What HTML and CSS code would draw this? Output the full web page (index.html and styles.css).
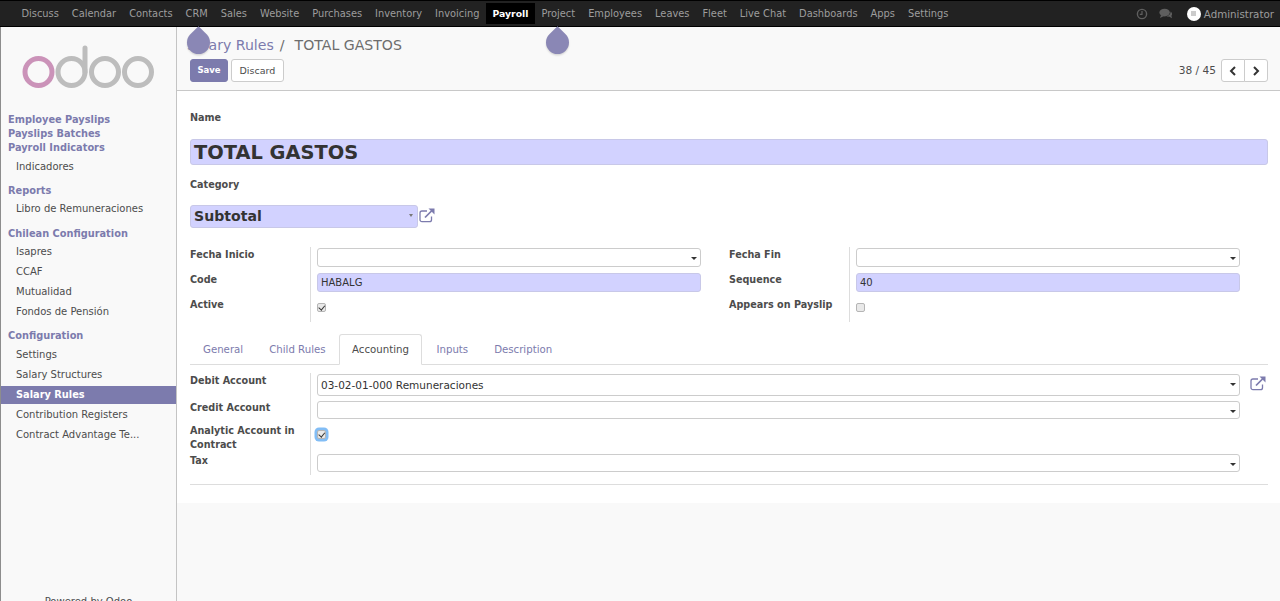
FILE: index.html
```html
<!DOCTYPE html>
<html lang="en">
<head>
  <meta charset="UTF-8" />
  <meta name="viewport" content="width=device-width, initial-scale=1.0" />
  <title>Salary Rules - TOTAL GASTOS</title>
  <link rel="stylesheet" href="styles.css">
</head>
<body>
  <header class="navbar">
    <nav class="apps">
      <a>Discuss</a><a>Calendar</a><a>Contacts</a><a>CRM</a><a>Sales</a><a>Website</a><a>Purchases</a><a>Inventory</a><a>Invoicing</a><a class="current">Payroll</a><a>Project</a><a>Employees</a><a>Leaves</a><a>Fleet</a><a>Live Chat</a><a>Dashboards</a><a>Apps</a><a>Settings</a>
    </nav>
    <div class="systray">
      <svg class="tray-icon" viewBox="0 0 12 12" width="12" height="12"><circle cx="6" cy="6" r="4.6" fill="none" stroke="#5f5f5f" stroke-width="1.4"/><path d="M6 3v3.4H3.8" fill="none" stroke="#5f5f5f" stroke-width="1.2"/></svg>
      <svg class="tray-icon" viewBox="0 0 14 12" width="14" height="12"><ellipse cx="5.6" cy="4.6" rx="5.2" ry="3.9" fill="#5f5f5f"/><path d="M2 7l-1 3 4-2zM11.6 3.4c1.6 1 2 3 .8 4.4l.6 2.4-3-1.6c-1 .1-2-.1-2.800-.5 2.600-.3 4.600-2.300 4.400-4.700z" fill="#5f5f5f"/></svg>
      <span class="avatar"><i></i></span>
      <span class="user">Administrator</span>
    </div>
  </header>

  <div class="main">
    <aside class="sidebar">
      <div class="logo">
        <svg viewBox="0 0 140 50" width="140" height="50">
          <circle cx="17.500" cy="30" r="13.500" fill="none" stroke="#cb93b9" stroke-width="5"/>
          <circle cx="50.500" cy="30" r="13.500" fill="none" stroke="#bdbdbd" stroke-width="5"/>
          <path d="M64 30V6" fill="none" stroke="#bdbdbd" stroke-width="5" stroke-linecap="round"/>
          <circle cx="84" cy="30" r="13.500" fill="none" stroke="#bdbdbd" stroke-width="5"/>
          <circle cx="117" cy="30" r="13.500" fill="none" stroke="#bdbdbd" stroke-width="5"/>
        </svg>
      </div>
      <div class="menu-head tight">Employee Payslips</div>
      <div class="menu-head tight">Payslips Batches</div>
      <div class="menu-head tight">Payroll Indicators</div>
      <a class="menu-item">Indicadores</a>
      <div class="menu-head">Reports</div>
      <a class="menu-item">Libro de Remuneraciones</a>
      <div class="menu-head wide-top">Chilean Configuration</div>
      <a class="menu-item">Isapres</a>
      <a class="menu-item">CCAF</a>
      <a class="menu-item">Mutualidad</a>
      <a class="menu-item">Fondos de Pensión</a>
      <div class="menu-head wide-bottom">Configuration</div>
      <a class="menu-item">Settings</a>
      <a class="menu-item">Salary Structures</a>
      <a class="menu-item active">Salary Rules</a>
      <a class="menu-item">Contribution Registers</a>
      <a class="menu-item">Contract Advantage Te...</a>
      <div class="powered">Powered by <b>Odoo</b></div>
    </aside>

    <main class="content">
      <div class="control-panel">
        <div class="breadcrumb"><a>Salary Rules</a><span class="sep">/</span><span>TOTAL GASTOS</span></div>
        <div class="cp-row">
          <div class="buttons">
            <button class="btn btn-primary">Save</button>
            <button class="btn">Discard</button>
          </div>
          <div class="pager">
            <span class="pager-count">38 / 45</span>
            <div class="pager-btns">
              <button><svg viewBox="0 0 8 10" width="8" height="10"><path d="M6 1L2 5l4 4" fill="none" stroke="#333" stroke-width="2"/></svg></button>
              <button><svg viewBox="0 0 8 10" width="8" height="10"><path d="M2 1l4 4-4 4" fill="none" stroke="#333" stroke-width="2"/></svg></button>
            </div>
          </div>
        </div>
      </div>

      <div class="sheet">
        <div class="top-label name-label">Name</div>
        <div class="field name-field required">TOTAL GASTOS</div>
        <div class="top-label cat-label">Category</div>
        <div class="cat-row">
          <div class="field cat-field required">Subtotal<i class="caret small"></i></div>
          <svg class="ext" viewBox="0 0 16 15" width="16" height="15"><use href="#ext-link"/></svg>
        </div>

        <div class="groups">
          <div class="group">
            <div class="lab">Fecha Inicio</div>
            <div class="val"><div class="field input">&nbsp;<i class="caret"></i></div></div>
            <div class="lab">Code</div>
            <div class="val"><div class="field input required">HABALG</div></div>
            <div class="lab">Active</div>
            <div class="val"><span class="check on"></span></div>
          </div>
          <div class="group">
            <div class="lab">Fecha Fin</div>
            <div class="val"><div class="field input">&nbsp;<i class="caret"></i></div></div>
            <div class="lab">Sequence</div>
            <div class="val"><div class="field input required">40</div></div>
            <div class="lab">Appears on Payslip</div>
            <div class="val"><span class="check"></span></div>
          </div>
        </div>

        <div class="tabs">
          <a>General</a><a>Child Rules</a><a class="open">Accounting</a><a>Inputs</a><a>Description</a>
        </div>

        <div class="acc">
          <div class="lab">Debit Account</div>
          <div class="val with-link">
            <div class="field tall">03-02-01-000 Remuneraciones<i class="caret"></i></div>
            <svg class="ext ext-far" viewBox="0 0 16 15" width="16" height="15"><use href="#ext-link"/></svg>
          </div>
          <div class="lab">Credit Account</div>
          <div class="val"><div class="field short">&nbsp;<i class="caret"></i></div></div>
          <div class="lab analytic">Analytic Account in Contract</div>
          <div class="val"><span class="check on focus"></span></div>
          <div class="lab">Tax</div>
          <div class="val"><div class="field short">&nbsp;<i class="caret"></i></div></div>
        </div>
        <hr class="sheet-end">
      </div>
    </main>
  </div>

  <span class="drop drop-a"></span>
  <span class="drop drop-b"></span>

  <svg width="0" height="0" class="defs">
    <symbol id="ext-link" viewBox="0 0 16 15">
      <path d="M12.500 8.500v3.200a2 2 0 0 1-2 2H3a2 2 0 0 1-2-2V5a2 2 0 0 1 2-2h5" fill="none" stroke="#7c7bad" stroke-width="1.300"/>
      <path d="M6 9.500L13 2.500" fill="none" stroke="#7c7bad" stroke-width="1.700"/>
      <path d="M9.500 .5H15.500V6.500z" fill="#7c7bad"/>
    </symbol>
  </svg>
</body>
</html>
```

FILE: styles.css
```css
* {
  box-sizing: border-box;
}
html, body {
  height: 100%;
  margin: 0;
  overflow: hidden;
}
body {
  font-family: "DejaVu Sans", sans-serif;
  font-size: 10px;
  color: #4c4c4c;
  background: #f9f9f9;
}
.defs {
  position: absolute;
}

/* top bar */
.navbar {
  display: flex;
  justify-content: space-between;
  height: 27px;
  padding: 3px 6px 0 15px;
  background: #222;
  border-top: 1px solid #000;
  border-bottom: 1px solid #000;
  color: #9d9d9d;
}
.apps {
  display: flex;
  margin-top: -1px;
  font-size: 9.850px;
}
.apps a {
  height: 21px;
  line-height: 21px;
  padding: 0 6.500px;
}
.apps .current {
  background: #000;
  color: #fff;
  font-weight: bold;
  font-size: 9.300px;
}
.systray {
  display: flex;
  align-items: center;
  height: 21px;
  margin-top: -1px;
}
.tray-icon {
  margin-right: 11px;
}
.avatar {
  display: flex;
  align-items: center;
  justify-content: center;
  width: 14px;
  height: 14px;
  margin-left: 3px;
  margin-right: 3px;
  border-radius: 50%;
  background: #fff;
}
.avatar i {
  width: 5px;
  height: 5px;
  background: #ccc;
}
.user {
  font-size: 10.300px;
}

/* layout */
.main {
  display: flex;
  height: calc(100% - 27px);
}
.sidebar {
  display: flex;
  flex-direction: column;
  flex: 0 0 177px;
  background: #f9f9f9;
  border-left: 1px solid #8d8d8d;
  border-right: 1px solid #c4c4c4;
}
.logo {
  height: 86px;
  padding: 15px 0 0 20px;
}
.menu-head {
  height: 14px;
  line-height: 14px;
  margin: 7px 0 1px;
  padding-left: 7px;
  font-weight: bold;
  font-size: 9.800px;
  color: #7c7bad;
}
.tight {
  margin: 0;
}
.wide-top {
  margin-top: 8px;
}
.wide-bottom {
  margin-bottom: 2px;
}
.menu-head.tight + .menu-item {
  margin-top: 3px;
}
.menu-item {
  display: block;
  height: 18px;
  line-height: 18px;
  margin: 1px 0;
  padding-left: 15px;
  white-space: nowrap;
}
.menu-item.active {
  background: #7c7bad;
  color: #fff;
  font-weight: bold;
  font-size: 9.800px;
}
.powered {
  margin-top: auto;
  margin-bottom: -8px;
  text-align: center;
  height: 13px;
}
.powered b {
  font-weight: normal;
}

/* control panel */
.content {
  flex: 1;
  min-width: 0;
}
.control-panel {
  height: 64px;
  padding: 8px 12px 0 13px;
  background: #f9f9f9;
  border-bottom: 1px solid #c8c8c8;
}
.breadcrumb {
  height: 21px;
  line-height: 20px;
  font-size: 14.100px;
  color: #6d6d6d;
  white-space: nowrap;
  margin-left: -3px;
}
.breadcrumb a {
  color: #7c7bad;
}
.sep {
  margin: 0 10px 0 6px;
}
.cp-row {
  display: flex;
  justify-content: space-between;
  margin-top: 3px;
}
.buttons {
  display: flex;
  gap: 3px;
}
.btn {
  height: 23px;
  padding: 0 7.500px 1px;
  font: inherit;
  font-size: 9.500px;
  color: #4c4c4c;
  background: #fff;
  border: 1px solid #ccc;
  border-radius: 3px;
}
.btn-primary {
  width: 38px;
  padding: 0 0 2px;
  color: #fff;
  font-weight: bold;
  font-size: 8.500px;
  background: #7c7bad;
  border-color: #7c7bad;
}
.pager {
  display: flex;
  align-items: center;
  gap: 5px;
  font-size: 10.600px;
}
.pager-count {
  margin-bottom: 2px;
}
.pager-btns {
  display: flex;
}
.pager-btns button {
  display: flex;
  align-items: center;
  justify-content: center;
  width: 24px;
  height: 23px;
  padding: 0;
  background: #fff;
  border: 1px solid #ccc;
}
.pager-btns button:first-child {
  border-radius: 3px 0 0 3px;
}
.pager-btns button:last-child {
  margin-left: -1px;
  border-radius: 0 3px 3px 0;
}

/* form sheet */
.sheet {
  height: 412px;
  padding: 0 12px 0 13px;
  background: #fff;
}
.top-label,
.lab {
  font-weight: bold;
  font-size: 9.650px;
  line-height: 14px;
}
.lab {
  padding-top: 1px;
}
.name-label {
  padding-top: 20px;
  height: 48px;
}
.field {
  position: relative;
  border: 1px solid #ccc;
  border-radius: 3px;
  background: #fff;
  color: #333;
  white-space: nowrap;
}
.required {
  background: #d2d2ff;
  border-color: #c8c8e8;
}
.name-field {
  height: 26px;
  line-height: 26px;
  padding-left: 3px;
  font-size: 19.400px;
  font-weight: bold;
}
.cat-label {
  height: 40px;
  padding-top: 13px;
}
.cat-row {
  display: flex;
  align-items: center;
}
.cat-field {
  width: 228px;
  height: 23px;
  line-height: 21px;
  padding-left: 3px;
  font-size: 14.100px;
  font-weight: bold;
}
.ext {
  margin-left: 1px;
  margin-bottom: 3px;
  flex: none;
}
.caret {
  position: absolute;
  right: 3px;
  top: 8px;
  border-top: 3px solid #333;
  border-left: 3px solid transparent;
  border-right: 3px solid transparent;
}
.caret.small {
  right: 4px;
  top: 8px;
  border-top-color: #777;
  border-left-width: 2px;
  border-right-width: 2px;
}
.groups {
  display: flex;
  gap: 28px;
  margin-top: 19px;
  padding-right: 28px;
}
.group {
  display: grid;
  flex: 1;
  grid-template-columns: 120px 1fr;
  grid-auto-rows: 25px;
  height: 69px;
}
.val {
  padding: 1px 0 0 6px;
  border-left: 1px solid #ddd;
}
.input {
  height: 19px;
  line-height: 17px;
  padding-left: 3px;
}
.check {
  display: block;
  position: relative;
  width: 9px;
  height: 9px;
  margin: 5px 0 0 0;
  border: 1px solid #b5b5b5;
  border-radius: 2px;
  background: #e9e9e9;
}
.check.on::after {
  content: "";
  position: absolute;
  left: 2.200px;
  top: 0;
  width: 2.500px;
  height: 4.500px;
  border: solid #333;
  border-width: 0 1.400px 1.400px 0;
  transform: rotate(40deg);
}
.check.focus {
  box-shadow: 0 0 0 2.500px #82bdf5;
}

/* tabs */
.tabs {
  display: flex;
  height: 31px;
  margin-top: 18px;
  border-bottom: 1px solid #ddd;
  color: #7c7bad;
  font-size: 10.200px;
}
.tabs a {
  padding: 0 13px;
  line-height: 32px;
}
.tabs .open {
  height: 31px;
  margin-right: 1px;
  background: #fff;
  color: #4c4c4c;
  border: 1px solid #ddd;
  border-bottom-color: #fff;
  border-radius: 3px 3px 0 0;
  padding: 0 12.500px;
  line-height: 30px;
}
.acc {
  display: grid;
  grid-template-columns: 120px 1fr;
  grid-template-rows: 27px 23px 30px 22px;
  margin-top: 8px;
  height: 103px;
}
.acc .val {
  padding-right: 28px;
}
.analytic {
  width: 110px;
}
.acc .check {
  margin: 6px 0 0 0;
}
.with-link {
  display: flex;
  position: relative;
}
.tall {
  flex: 1;
  height: 22px;
  line-height: 20px;
  padding-left: 3px;
  font-size: 10.500px;
}
.ext-far {
  position: absolute;
  right: 2px;
  top: 3px;
  margin: 0;
}
.short {
  height: 18px;
  line-height: 16px;
}
.sheet-end {
  margin: 8px 0 0;
  border: 0;
  border-top: 1px solid #ddd;
}

/* walkthrough drops over the page */
.drop {
  position: absolute;
  top: 31px;
  width: 23px;
  height: 23px;
  background: #8a87b5;
  border-radius: 50% 0 50% 50%;
  transform: rotate(-45deg);
  box-shadow: -1px 1px 2px rgba(0, 0, 0, 0.15);
}
.drop-a {
  left: 187px;
}
.drop-b {
  left: 546px;
}
```
